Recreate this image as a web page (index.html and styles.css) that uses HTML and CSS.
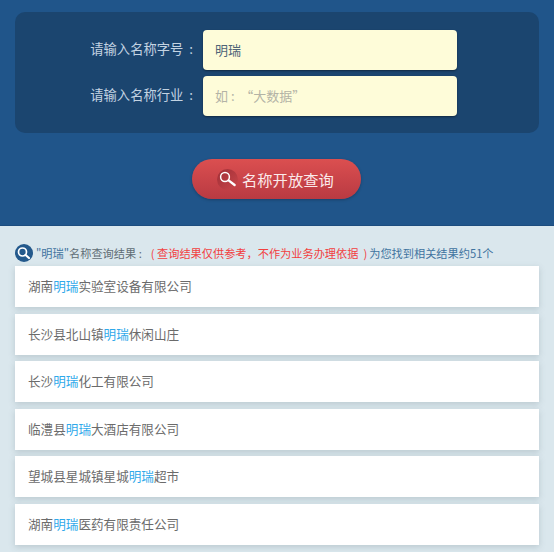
FILE: index.html
```html
<!DOCTYPE html>
<html lang="zh-CN">
<head>
  <meta charset="UTF-8" />
  <meta name="viewport" content="width=device-width, initial-scale=1.0"/>
  <title>名称开放查询</title>
  <link rel="stylesheet" href="styles.css">
</head>
<body>
  <div class="search">
    <div class="panel">
      <div class="form-row">
        <label>请输入名称字号&nbsp; :</label>
        <input type="text" value="明瑞">
      </div>
      <div class="form-row">
        <label>请输入名称行业&nbsp; :</label>
        <input type="text" placeholder="如 :&nbsp;&nbsp;“大数据”">
      </div>
    </div>
    <button class="query-btn">
      <span class="btn-icon">
        <svg width="18" height="18" viewBox="0 0 18 18">
          <circle cx="6" cy="7" r="4.4" fill="none" stroke="#fff" stroke-width="1.5"/>
          <path d="M9.6 10.4L15.6 15" stroke="#fff" stroke-width="2.4" stroke-linecap="round"/>
        </svg>
      </span>
      名称开放查询
    </button>
  </div>

  <div class="results">
    <div class="summary">
      <span class="summary-icon">
        <svg width="18" height="18" viewBox="0 0 18 18">
          <circle cx="7.5" cy="8" r="4" fill="none" stroke="#fff" stroke-width="1.7"/>
          <path d="M10.6 11L14 14" stroke="#fff" stroke-width="2.2" stroke-linecap="round"/>
        </svg>
      </span>
      <span class="blue">"明瑞"</span><span class="title">名称查询结果 :</span><span class="red">( 查询结果仅供参考，不作为业务办理依据&nbsp; )</span><span class="blue">为您找到相关结果约51个</span>
    </div>
    <ul class="result-list">
      <li>湖南<em>明瑞</em>实验室设备有限公司</li>
      <li>长沙县北山镇<em>明瑞</em>休闲山庄</li>
      <li>长沙<em>明瑞</em>化工有限公司</li>
      <li>临澧县<em>明瑞</em>大酒店有限公司</li>
      <li>望城县星城镇星城<em>明瑞</em>超市</li>
      <li>湖南<em>明瑞</em>医药有限责任公司</li>
    </ul>
  </div>
</body>
</html>
```

FILE: styles.css
```css
* { box-sizing: border-box; }
html, body { height: 100%; }
body { margin: 0; overflow: hidden; background: #dae7ed; font-family: "Noto Sans CJK SC", "Liberation Sans", sans-serif; }

.search { height: 226px; padding: 12px 15px 0; background: #20558a; border-bottom: 1px solid #1c4c7e; }
.panel { height: 121px; padding-top: 18px; background: #1b456f; border-radius: 10px; }
.form-row { display: flex; align-items: center; height: 40px; margin-bottom: 6px; }
.form-row label { width: 178px; margin-right: 10px; padding-bottom: 4px; text-align: right; font-size: 13.3px; color: #c3d3e2; white-space: nowrap; }
.form-row input { width: 254px; height: 40px; margin: 0; padding: 0 12px 2px; border: 0; border-radius: 4px; background: #fefcd9; box-shadow: 0 1px 2px rgba(0, 0, 0, 0.4); font: 13px "Noto Sans CJK SC", sans-serif; color: #4f6478; outline: none; }
.form-row input::placeholder { color: #b3b3a6; opacity: 1; }

.query-btn { display: flex; align-items: center; width: 169px; height: 40px; margin: 26px 0 0 177px; padding: 0 0 0 25px; border: 0; border-radius: 20px; background: linear-gradient(#db4f50, #b93a42); box-shadow: 0 1px 3px rgba(0, 0, 0, 0.25); font: 15.3px "Noto Sans CJK SC", sans-serif; color: #fbeaea; }
.btn-icon { display: flex; align-items: center; justify-content: center; width: 21px; height: 21px; margin-right: 4px; border-radius: 50%; background: linear-gradient(135deg, #a02f37, #c9464a); }

.results { padding: 17px 15px 0; }
.summary { display: flex; align-items: center; height: 20px; margin-bottom: 3px; font-size: 11.2px; white-space: nowrap; color: #5f6d75; }
.summary-icon { display: flex; align-items: center; justify-content: center; width: 18px; height: 18px; margin-right: 3px; border-radius: 50%; background: #23598c; }
.title { margin-right: 9px; }
.blue { color: #3f739f; }
.red { margin-right: 2px; color: #f2403f; }

.result-list { margin: 0; padding: 0; list-style: none; }
.result-list li { height: 41px; margin-bottom: 6.6px; padding-left: 13px; line-height: 40px; font-size: 12.6px; color: #6b6b6b; background: #fff; box-shadow: 0 2px 6px rgba(90, 110, 120, 0.25); }
.result-list em { font-style: normal; color: #2fa9ea; }
```
